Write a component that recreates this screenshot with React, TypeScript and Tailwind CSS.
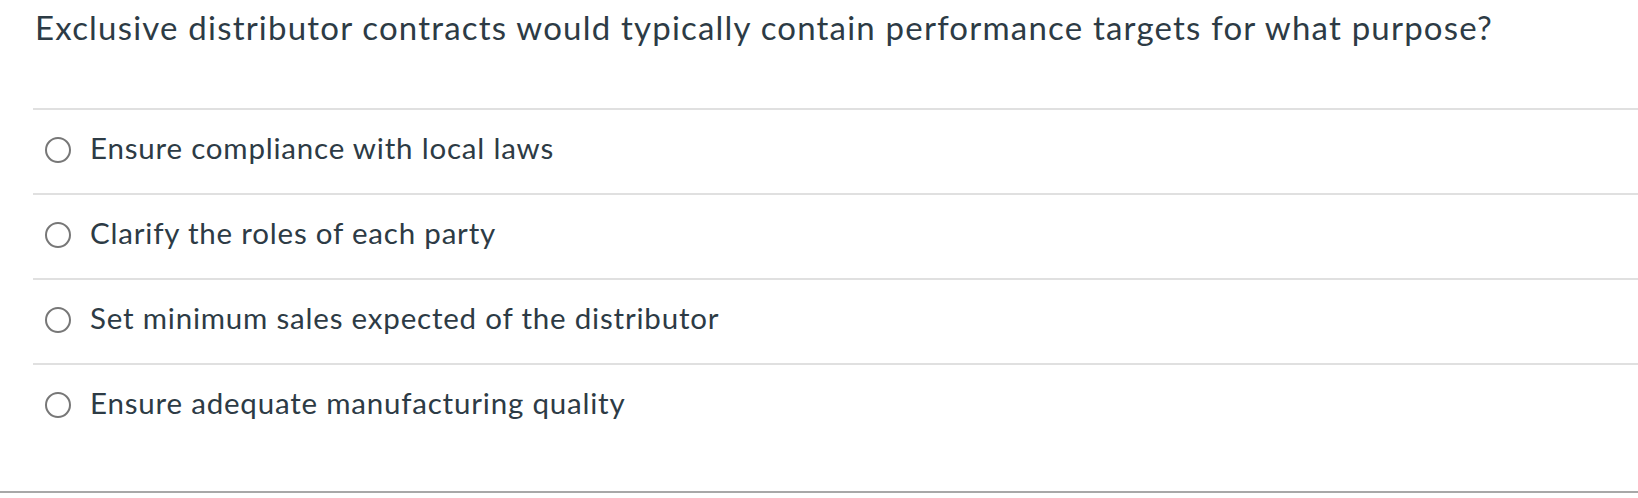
import React from "react";

const options = [
  "Ensure compliance with local laws",
  "Clarify the roles of each party",
  "Set minimum sales expected of the distributor",
  "Ensure adequate manufacturing quality",
];

export default function App() {
  return (
    <div
      className="w-[1638px] h-[498px] bg-white overflow-hidden text-[#2d3b45]"
      style={{ fontFamily: "Lato, 'Open Sans', sans-serif" }}
    >
      <div className="pl-[33px]">
        <div className="h-[108px] pt-[8px]">
          <h1 className="text-[33px] leading-[39px] tracking-[1.2px] font-normal pl-[2px] whitespace-nowrap">
            Exclusive distributor contracts would typically contain performance targets for what purpose?
          </h1>
        </div>
        {options.map((o) => (
          <div
            key={o}
            className="h-[85px] border-t-2 border-[#e0e0e0] flex items-center pb-[4px]"
          >
            <span className="ml-[12px] w-[26px] h-[26px] rounded-full border-2 border-[#777777] shrink-0" />
            <span className="ml-[19px] mb-[4px] text-[29.5px] leading-[35px] tracking-[0.8px] whitespace-nowrap">
              {o}
            </span>
          </div>
        ))}
        <div className="h-[43px]" />
      </div>
      <div className="h-[2px] bg-[#a8a8a8]" />
    </div>
  );
}
